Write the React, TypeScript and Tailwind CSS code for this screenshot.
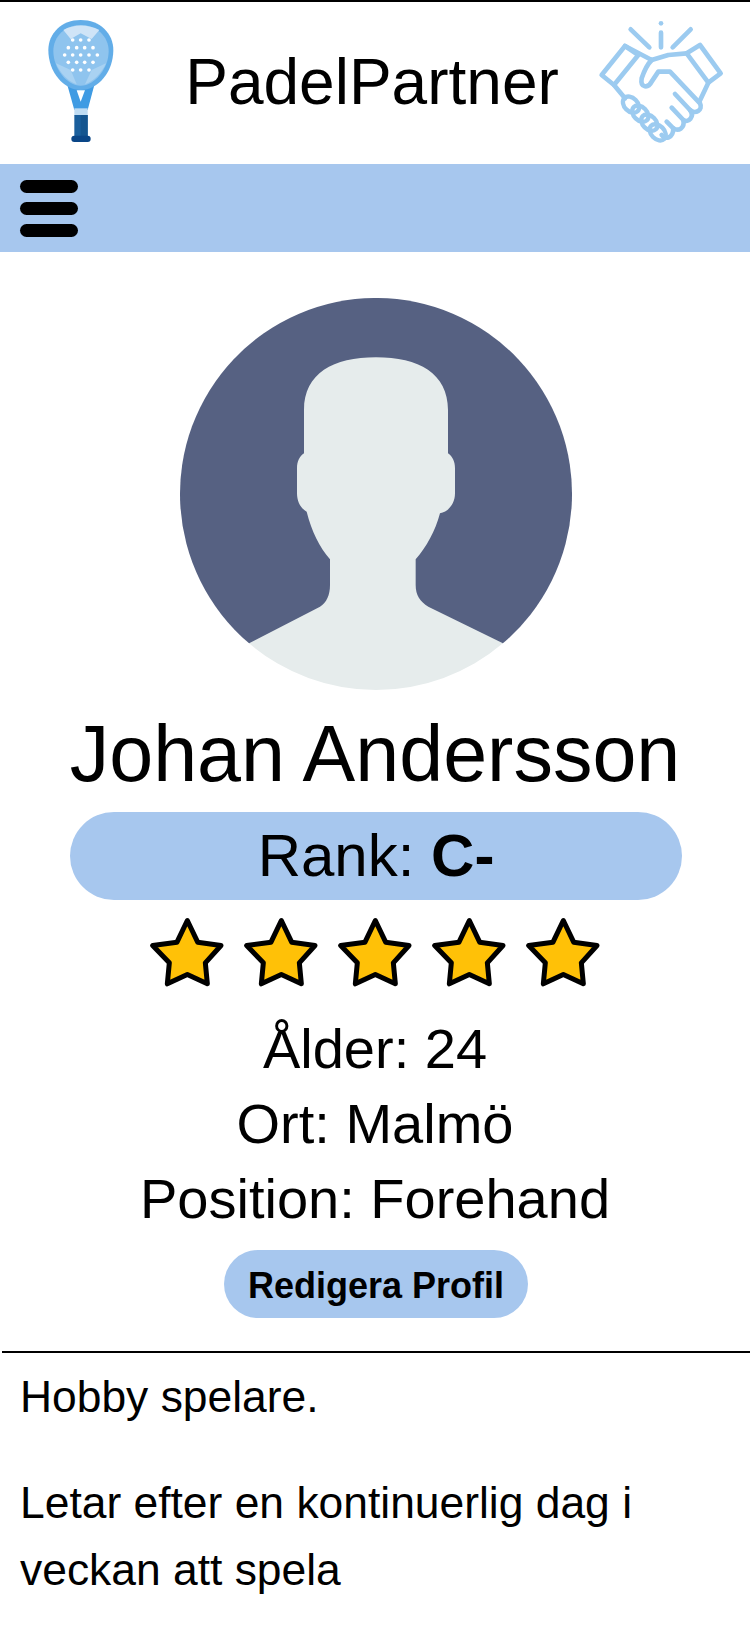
const font = { fontFamily: '"Liberation Sans", Arial, sans-serif' };

function Racket() {
  const dots = [[98,75],[122,75],[147,75],[85,98],[110,98],[134,98],[159,98],[74,120],[98,120],[122,120],[147,120],[172,120],[85,142],[110,142],[134,142],[159,142],[98,165],[122,165],[147,165]];
  return (
    <svg width="80" height="130" viewBox="0 0 240 390" className="shrink-0 self-start mt-[13px]">
      <path d="M82 210 L103 285 L143 285 L163 210Z" fill="#3f9be3" />
      <path d="M110 226 L135 226 L122 260Z" fill="#ffffff" />
      <rect x="103" y="280" width="40" height="22" fill="#bfdcf3" />
      <rect x="103" y="300" width="40" height="66" fill="#1a5f9c" />
      <rect x="122" y="300" width="21" height="66" fill="#14558f" />
      <rect x="94" y="362" width="58" height="19" rx="9" fill="#0a4687" />
      <path d="M122 15 C180 15 220 55 220 105 C220 170 175 225 122 225 C70 225 25 170 25 105 C25 55 65 15 122 15Z" fill="#62ade8" />
      <path d="M122 30 C170 30 206 65 206 108 C206 160 165 212 122 212 C80 212 40 160 40 108 C40 65 75 30 122 30Z" fill="#8fc4ee" />
      <path d="M70 45 C100 27 145 27 178 45 L155 72 L122 55 L92 72Z" fill="#cfe4f7" />
      <path d="M48 145 L92 165 L110 208 C85 200 60 175 48 145Z M198 145 L155 165 L135 208 C160 200 185 175 198 145Z" fill="#a9d2f2" />
      <g fill="#ffffff">
        {dots.map(([x, y]) => (
          <circle key={`${x}-${y}`} cx={x} cy={y} r="5.5" />
        ))}
      </g>
    </svg>
  );
}

function Handshake() {
  return (
    <svg width="140" height="140" viewBox="0 0 420 420" fill="none" stroke="#9ccbf0" strokeWidth="14" strokeLinecap="round" strokeLinejoin="round" className="shrink-0 self-start mt-[8px]">
      <path d="M122 58 L178 112 M213 68 L213 112 M302 58 L248 112" />
      <circle cx="213" cy="40" r="7" fill="#9ccbf0" stroke="none" />
      <path d="M105 108 L35 195 L72 225 L145 135 Z" />
      <path d="M330 105 L392 190 L355 218 L290 130 Z" />
      <path d="M105 108 L185 150 L235 135 L290 130" />
      <path d="M185 150 C170 165 160 190 155 205 C150 235 175 235 185 215 L205 185 L240 185 L330 280 C340 300 315 315 300 300 L255 252" />
      <path d="M300 300 C315 320 295 340 280 330 L245 293" />
      <path d="M280 330 C285 355 265 365 250 355 L230 335" />
      <path d="M250 355 C250 385 225 390 215 375" />
      <path d="M355 218 L328 275" />
      <path d="M72 225 L105 265" />
      <ellipse rx="28" ry="20" strokeWidth="13" transform="translate(123 284) rotate(45)" />
      <ellipse rx="28" ry="20" strokeWidth="13" transform="translate(151 311) rotate(45)" />
      <ellipse rx="28" ry="20" strokeWidth="13" transform="translate(178 338) rotate(45)" />
      <ellipse rx="28" ry="20" strokeWidth="13" transform="translate(203 367) rotate(45)" />
    </svg>
  );
}

function Avatar() {
  return (
    <svg width="392" height="392" viewBox="60 54 1176 1176" className="ml-[2px]">
      <path d="M267.2 1090 A588 588 0 1 1 1028.8 1090 Z" fill="#566182" />
      <path d="M432 520 L432 390 C432 280 520 232 648 232 C776 232 864 280 864 390 L864 520 C878 530 885 545 885 565 L885 640 C885 672 865 695 840 700 C825 755 800 800 767 838 L767 915 C767 945 780 965 805 980 L1028.8 1090 A588 588 0 0 1 267.2 1090 L480 980 C500 968 510 945 510 915 L510 838 C478 800 455 755 440 695 C422 685 411 665 411 640 L411 565 C411 545 418 530 432 520Z" fill="#e6ecec" />
    </svg>
  );
}

function Star() {
  return (
    <svg width="74" height="71" viewBox="60 50 222 212">
      <path d="M172 60 L203 125 L273 135 L226 187 L232 250 L172 222 L112 250 L118 187 L68 135 L141 125 Z" fill="#ffc107" stroke="#000" strokeWidth="15" strokeLinejoin="round" />
    </svg>
  );
}

export default function App() {
  return (
    <div className="w-[750px] h-[1626px] bg-white text-black overflow-hidden" style={font}>
      <div className="h-[2px] bg-black" />
      <header className="h-[162px] flex items-center justify-between pl-[40px] pr-[20px]">
        <Racket />
        <h1 className="text-[64px] leading-none font-normal pl-[34px] -mt-[2px]">PadelPartner</h1>
        <Handshake />
      </header>
      <nav className="h-[88px] bg-[#a7c7ee] flex flex-col justify-center gap-[9px] pl-[20px]">
        <div className="w-[58px] h-[13px] rounded-full bg-black" />
        <div className="w-[58px] h-[13px] rounded-full bg-black" />
        <div className="w-[58px] h-[13px] rounded-full bg-black" />
      </nav>
      <main className="flex flex-col items-center pt-[46px]">
        <Avatar />
        <h2 className="text-[79px] leading-[92px] font-normal mt-[18px]">Johan Andersson</h2>
        <div className="w-[612px] h-[88px] mt-[12px] ml-[2px] rounded-full bg-[#a7c7ee] flex items-center justify-center text-[60px]">
          <span>Rank: <b>C-</b></span>
        </div>
        <div className="flex gap-[20px] mt-[17px]">
          <Star /><Star /><Star /><Star /><Star />
        </div>
        <div className="text-[56px] leading-[75px] text-center mt-[23px]">
          <div>Ålder: 24</div>
          <div>Ort: Malmö</div>
          <div>Position: Forehand</div>
        </div>
        <button className="mt-[14px] ml-[2px] w-[304px] h-[68px] pt-[3px] rounded-full bg-[#a7c7ee] font-bold text-[36px]">Redigera Profil</button>
      </main>
      <hr className="mt-[33px] ml-[2px] border-t-2 border-black" />
      <section className="px-[20px] pt-[10px] text-[44.4px] leading-[67px]">
        <p>Hobby spelare.</p>
        <p className="mt-[39px]">Letar efter en kontinuerlig dag i veckan att spela</p>
      </section>
    </div>
  );
}
